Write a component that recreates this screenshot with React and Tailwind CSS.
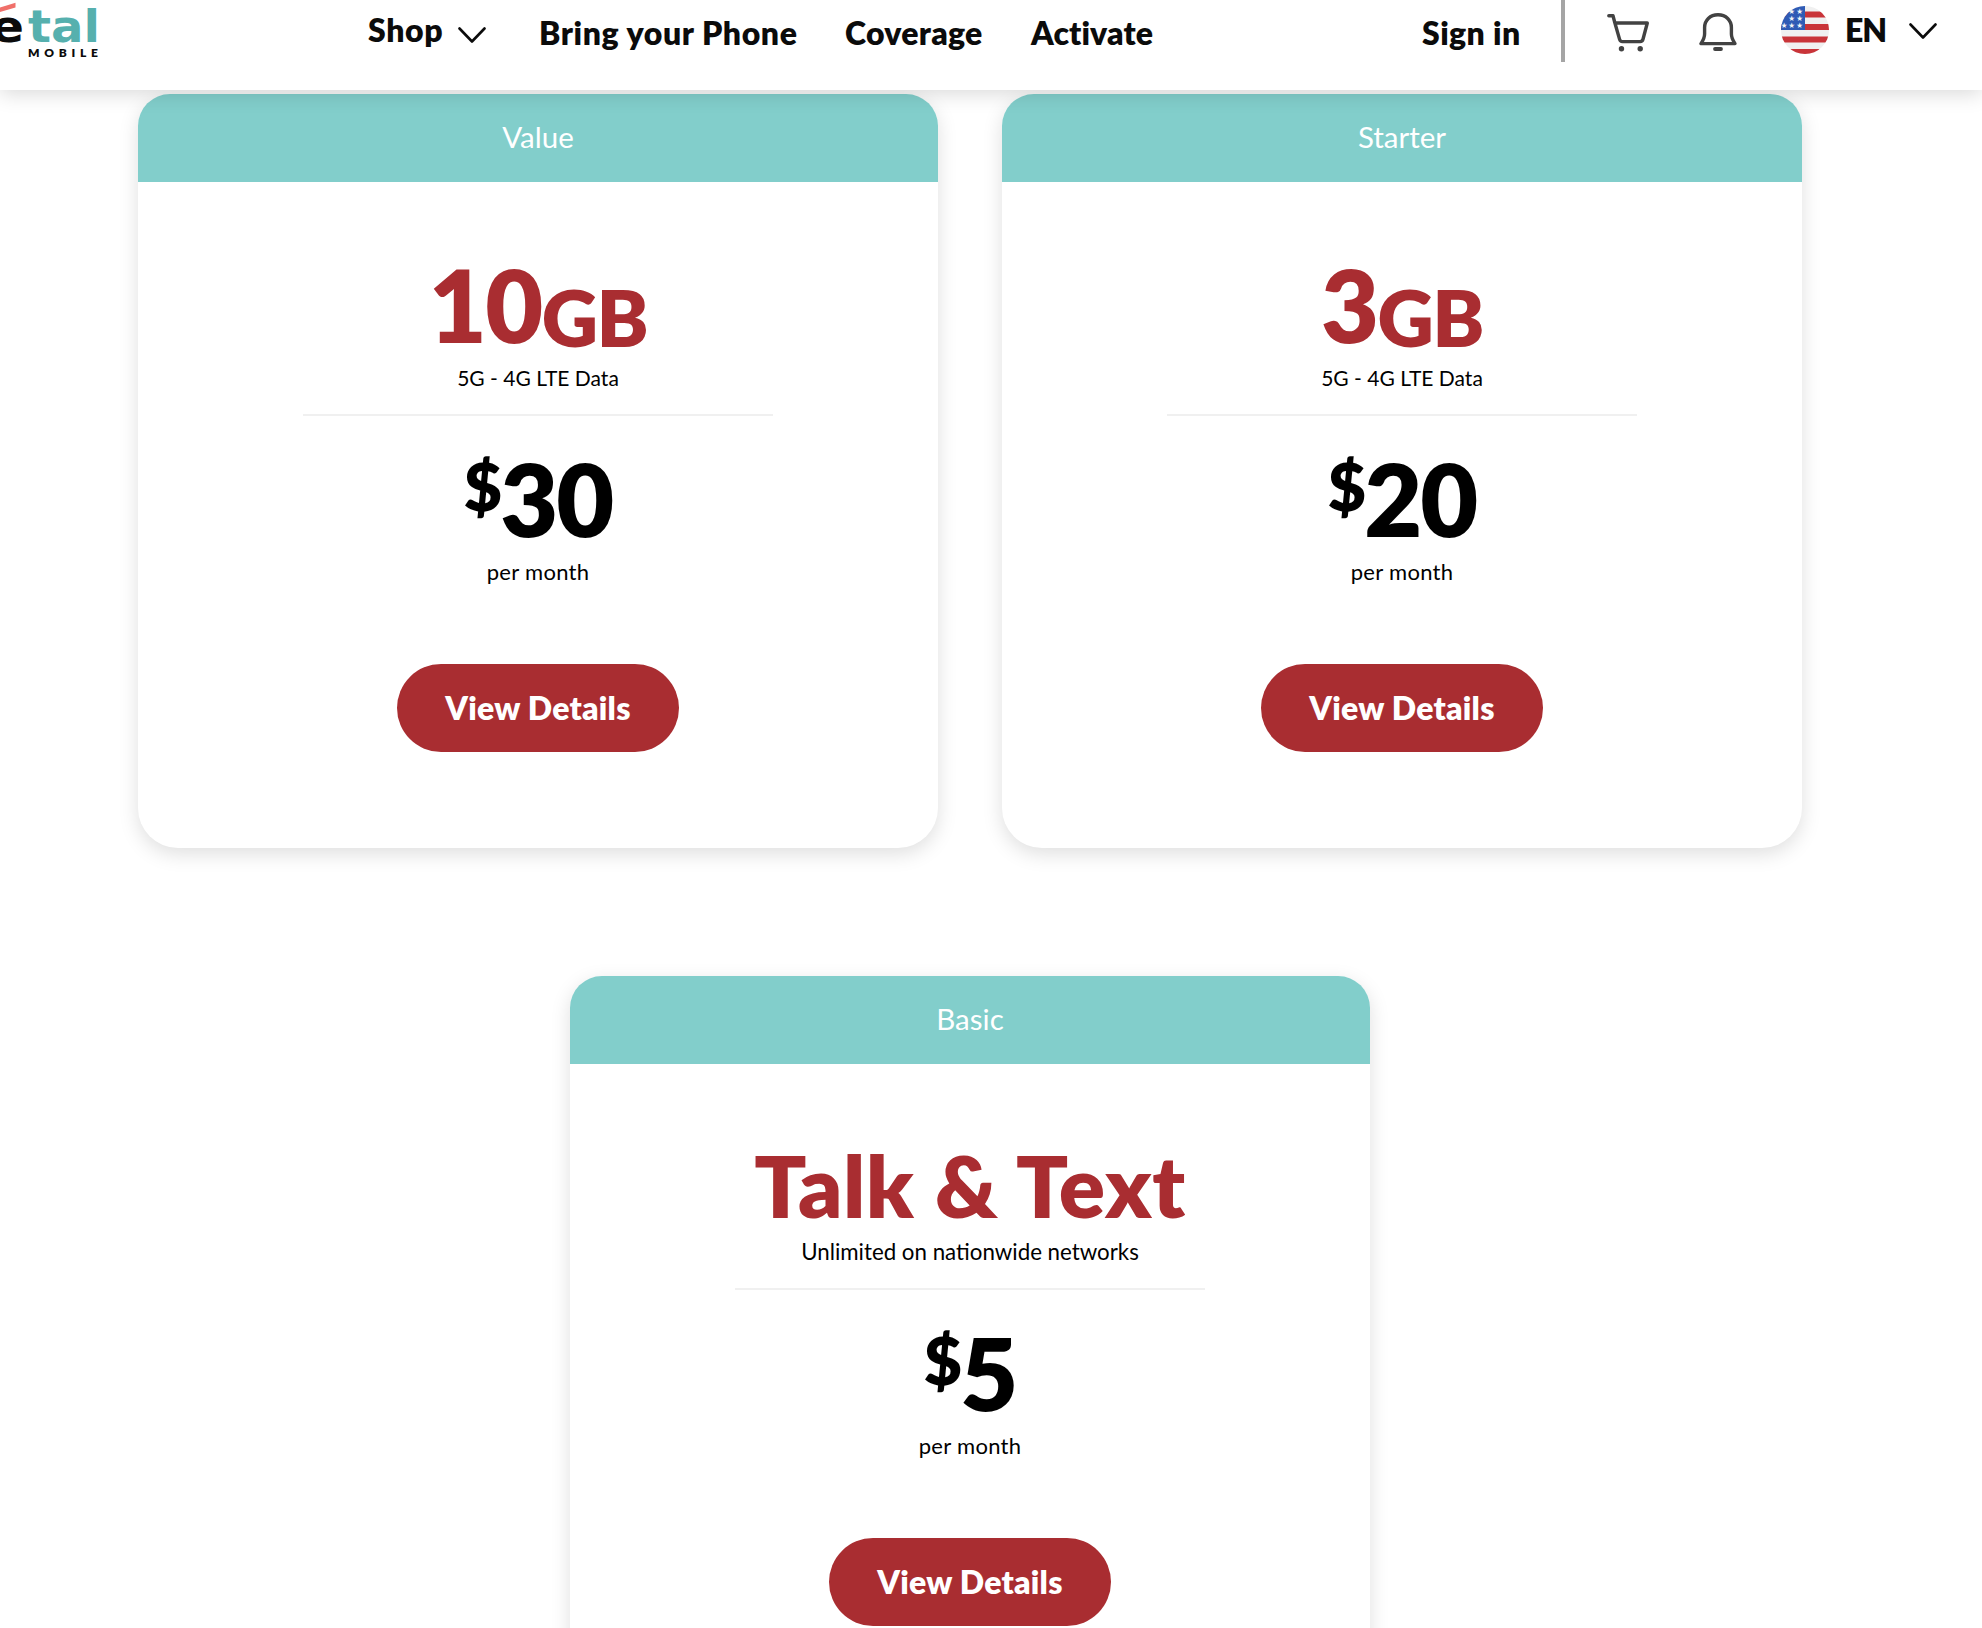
const plans = [
  { name: "Value", amount: "10", unit: "GB", note: "5G - 4G LTE Data", price: "30" },
  { name: "Starter", amount: "3", unit: "GB", note: "5G - 4G LTE Data", price: "20" },
  {
    name: "Basic",
    title: "Talk & Text",
    note: "Unlimited on nationwide networks",
    price: "5",
  },
];

const Logo = () => (
  <svg width="110" height="60" viewBox="0 0 110 60" className="shrink-0">
    <polygon points="0,7.5 15.5,2.8 15.5,7.5 0,12" fill="#f0706a" />
    <g fontFamily="DejaVu Sans" fontWeight="700">
      <text x="-9" y="41.5" fontSize="44" fill="#0b0b0b" textLength="33" lengthAdjust="spacingAndGlyphs">e</text>
      <text x="28" y="41.5" fontSize="44" fill="#56b0ae" textLength="72" lengthAdjust="spacingAndGlyphs">tal</text>
    </g>
    <text x="28" y="56.5" fontSize="12" fontFamily="Lato" fontWeight="800" fill="#0b0b0b" textLength="70">
      MOBILE
    </text>
  </svg>
);

const Chevron = ({ className }) => (
  <svg width="28" height="16" viewBox="0 0 28 16" fill="none" stroke="#0b0b0b" strokeWidth="2.6" strokeLinecap="round" strokeLinejoin="round" className={className}>
    <path d="M1.5 1.5 14 14.5 26.5 1.5" />
  </svg>
);

const CartIcon = () => (
  <svg width="44" height="40" viewBox="0 0 44 40" fill="none" stroke="#424242" strokeWidth="3.4" strokeLinecap="round" strokeLinejoin="round">
    <path d="M1.8 3.8H6l1.900 7.200h32.400L36 27.200a3 3 0 0 1-2.900 2.400H15.500a3 3 0 0 1-2.900-2.200L7.900 11" />
    <circle cx="14.5" cy="36.8" r="2.7" fill="#424242" stroke="none" />
    <circle cx="33.2" cy="36.8" r="2.7" fill="#424242" stroke="none" />
  </svg>
);

const BellIcon = () => (
  <svg width="38" height="40" viewBox="0 0 38 40" fill="none" stroke="#424242" strokeWidth="3.4" strokeLinecap="round" strokeLinejoin="round">
    <path d="M19 3.8C11 3.8 5.600 9.500 5.600 16.500V23c0 4-1.200 6-3.600 9.600h34C33.600 29 32.400 27 32.400 23v-6.500C32.400 9.500 27 3.800 19 3.800z" />
    <path d="M16 38h6" strokeWidth="3.800" />
  </svg>
);

const FlagIcon = () => (
  <svg width="48" height="48" viewBox="0 0 48 48">
    <clipPath id="flag">
      <circle cx="24" cy="24" r="24" />
    </clipPath>
    <g clipPath="url(#flag)">
      <rect width="48" height="48" fill="#f0f0f0" />
      {[5.5, 18, 30.5, 43].map((y) => (
        <rect key={y} y={y} width="48" height="6" fill="#c93439" />
      ))}
      <rect width="24" height="24" fill="#2f5bb5" />
    </g>
    <g fill="#f4f4f4" fontFamily="DejaVu Sans" fontSize="7.5" textAnchor="middle">
      {[8, 15, 22].map((y) => (
        <text key={y} x="18.5" y={y}>★</text>
      ))}
      {[8, 15, 22].map((y) => (
        <text key={y} x="10.5" y={y}>★</text>
      ))}
      <text x="3" y="22">★</text>
    </g>
  </svg>
);

const Header = () => (
  <header className="relative z-10 flex h-[90px] items-start bg-white text-[32px] leading-[38px] font-extrabold text-[#0b0b0b] shadow-[0_3px_20px_rgba(0,0,0,0.16)]">
    <Logo />
    <nav className="ml-[258px] flex">
      <a className="flex pt-[11px]">
        <span className="w-[90px] tracking-[0.6px]">Shop</span>
        <Chevron className="mt-[16px]" />
      </a>
      <a className="ml-[53px] w-[306px] pt-[14px] tracking-[0.6px]">Bring your Phone</a>
      <a className="w-[186px] pt-[14px] tracking-[0.3px]">Coverage</a>
      <a className="pt-[14px] tracking-[0.1px]">Activate</a>
    </nav>
    <div className="ml-auto flex w-[560px]">
      <a className="w-[139px] pt-[14px] tracking-[0.4px]">Sign in</a>
      <div className="h-[62px] w-[4px] bg-[#a5a5a5]" />
      <div className="pt-[12px] pl-[42px]">
        <CartIcon />
      </div>
      <div className="pt-[11px] pl-[48px]">
        <BellIcon />
      </div>
      <div className="pt-[6px] pl-[44px]">
        <FlagIcon />
      </div>
      <span className="w-[80px] pt-[11px] pl-[16px] tracking-[-1px]">EN</span>
      <Chevron className="mt-[23px]" />
    </div>
  </header>
);

const PlanCard = ({ plan }) => (
  <section className="flex h-[754px] w-[800px] flex-col items-center overflow-hidden rounded-t-[32px] rounded-b-[40px] bg-white text-black shadow-[0_6px_20px_rgba(0,0,0,0.13)]">
    <h2 className="h-[88px] w-full bg-[#82cecb] text-center text-[29.5px] leading-[86px] text-white">
      {plan.name}
    </h2>
    {plan.title ? (
      <div className="h-[175px] pt-[69px] text-[86px] leading-[104px] font-extrabold tracking-[0.5px] text-[#a92d31]">
        {plan.title}
      </div>
    ) : (
      <div className="flex h-[183px] items-start pt-[70px] text-[100px] leading-[104px] font-extrabold tracking-[-1.5px] text-[#a92d31]">
        <span>{plan.amount}</span>
        <span className="pt-[13px] text-[78px]">{plan.unit}</span>
      </div>
    )}
    <p className={plan.title ? "text-[22.3px] leading-[26px]" : "text-[21px] leading-[26px]"}>
      {plan.note}
    </p>
    <hr className="mt-[23px] w-[470px] border-t-2 border-[#f0f0f0]" />
    <div className="flex h-[143px] items-start pt-[30px] text-[100px] leading-[104px] font-extrabold tracking-[-2px]">
      <span className="-mt-[12px] text-[66px]">$</span>
      <span>{plan.price}</span>
    </div>
    <p className="text-[22px] leading-[26px] tracking-[0.3px]">per month</p>
    <button className="mt-[79px] h-[88px] w-[282px] rounded-full bg-[#a92d31] text-[32px] font-extrabold tracking-[0.25px] text-white">
      View Details
    </button>
  </section>
);

export default function App() {
  return (
    <div className="h-[1628px] overflow-hidden bg-white font-['Lato',sans-serif]">
      <Header />
      <main className="flex w-[1940px] flex-wrap justify-center gap-x-[64px] gap-y-[128px] pt-[4px]">
        {plans.map((plan) => (
          <PlanCard key={plan.name} plan={plan} />
        ))}
      </main>
    </div>
  );
}
